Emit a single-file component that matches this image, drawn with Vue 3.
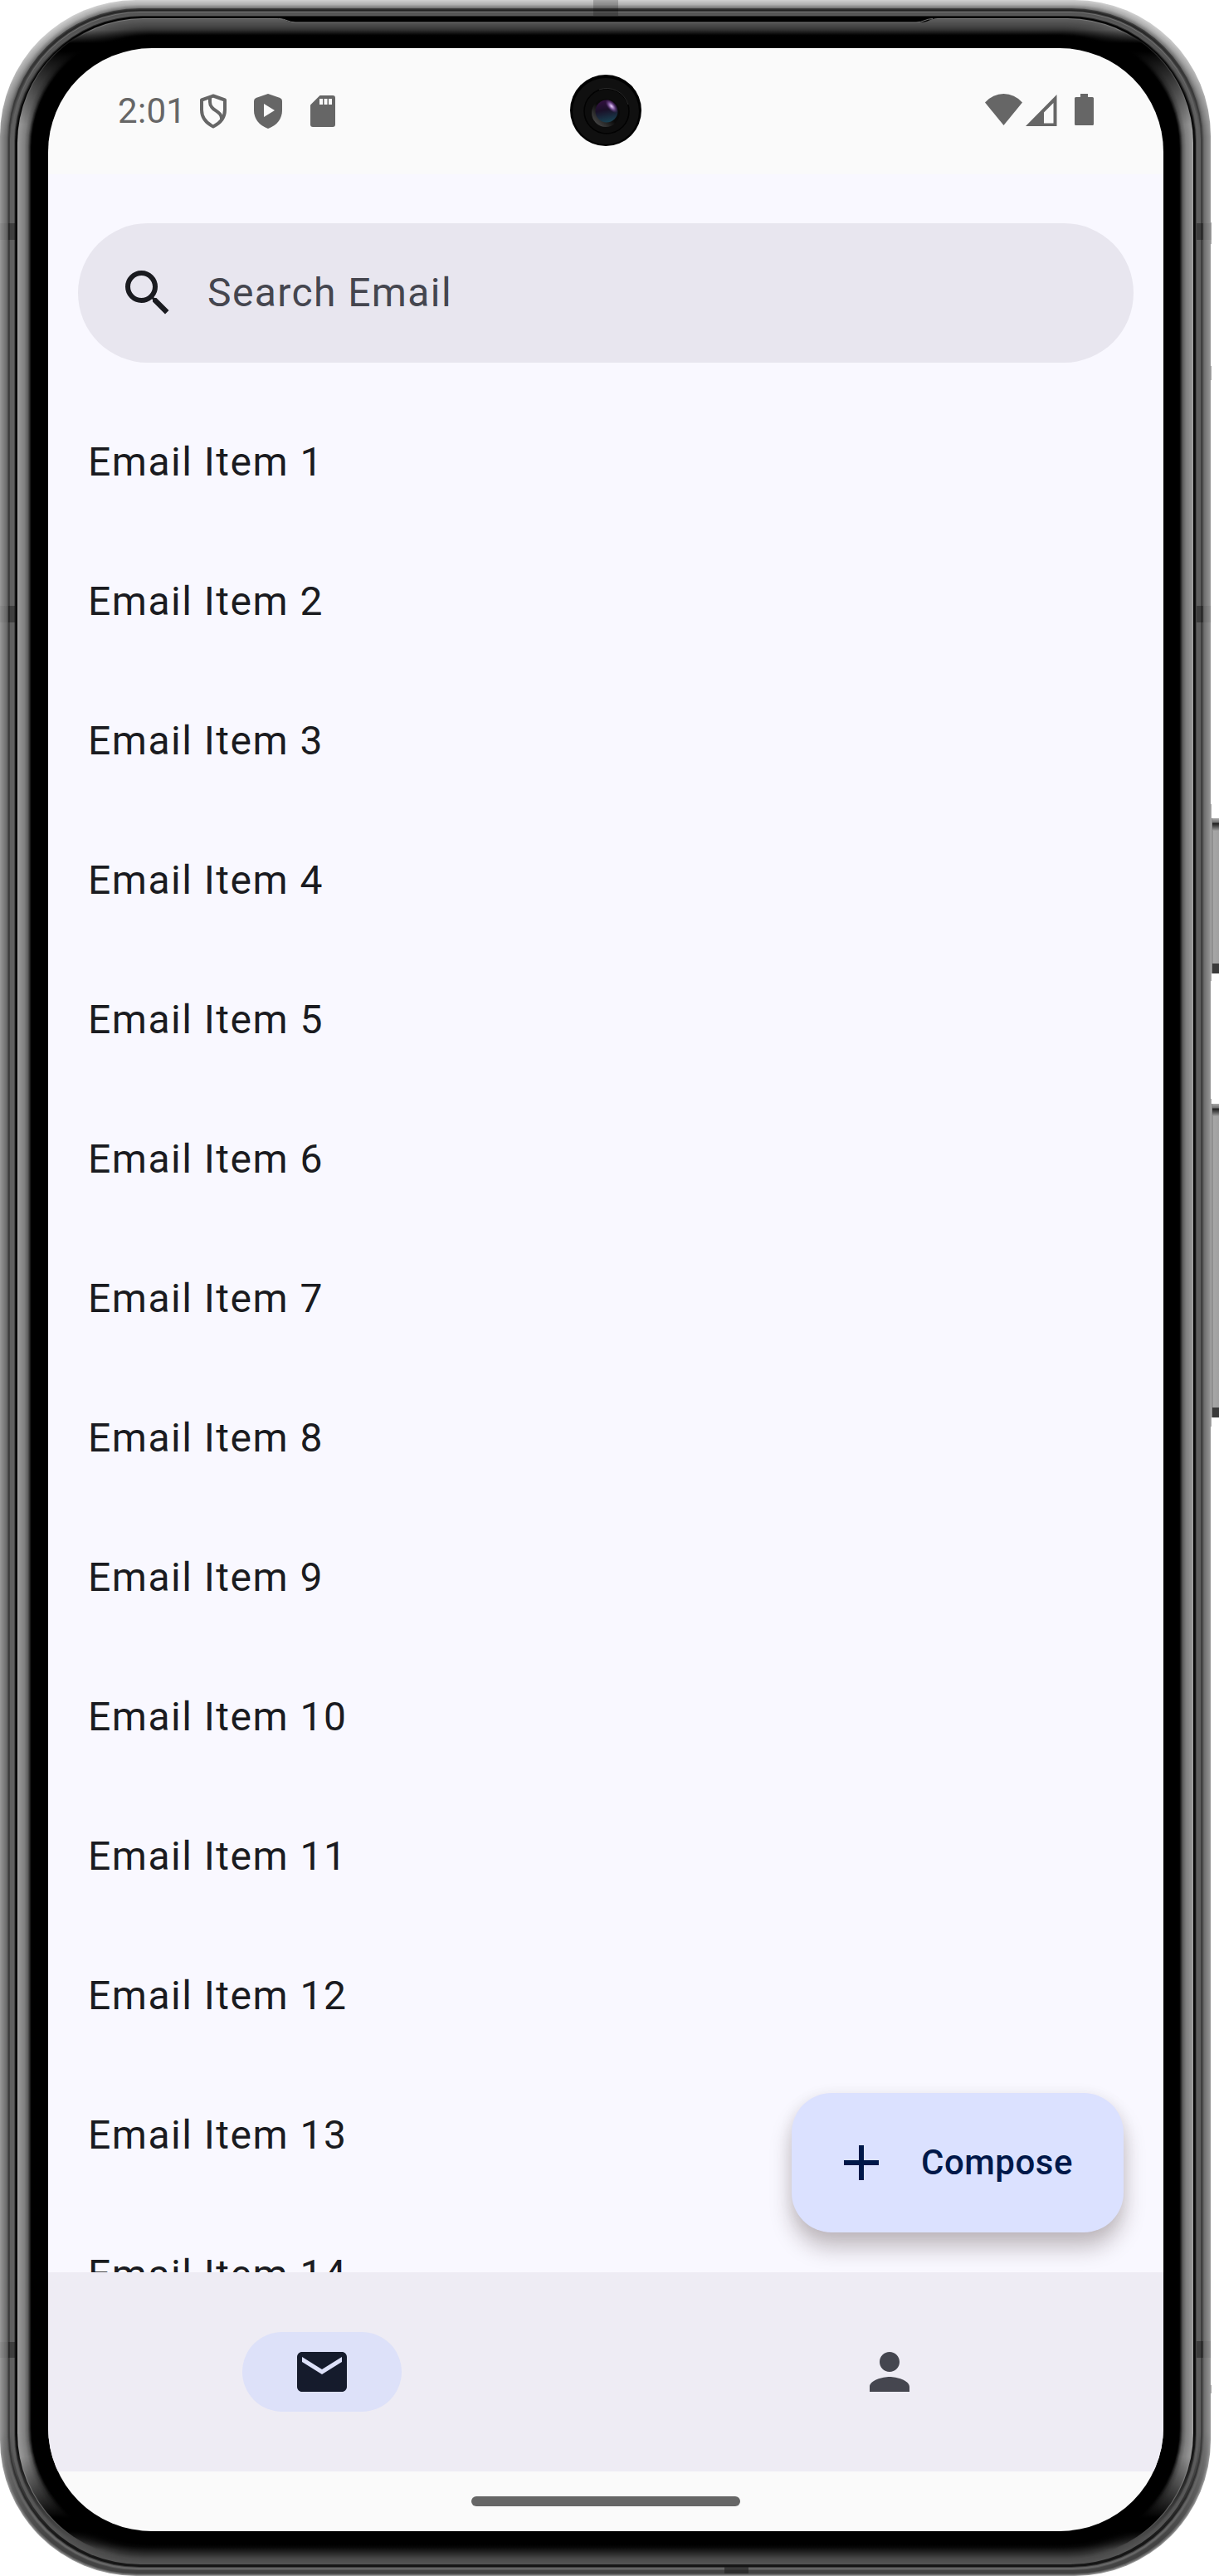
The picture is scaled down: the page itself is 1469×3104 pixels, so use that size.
<script setup>
const emails = Array.from({ length: 14 }, (_, i) => `Email Item ${i + 1}`)

// Grey levels of the metal frame, keyed by distance from the outer edge.
const sideProfile = [[0, 150], [2, 138], [7, 112], [9, 84], [10, 58], [11, 66], [12, 94], [16, 96], [17, 70], [18, 20], [20, 0], [21, 165], [22, 150], [29, 128], [33, 95], [35, 50], [37, 4], [38, 0], [58, 0]]
const topProfile = [[0, 205], [5, 175], [9, 120], [10, 60], [12, 34], [13, 60], [14, 112], [15, 84], [18, 88], [19, 40], [20, 0], [21, 10], [22, 118], [23, 92], [31, 70], [36, 48], [39, 30], [42, 3], [44, 0], [58, 0]]
const bottomProfile = [[0, 150], [1, 112], [3, 66], [6, 68], [8, 104], [9, 100], [10, 62], [11, 20], [13, 24], [14, 84], [20, 74], [28, 36], [34, 8], [38, 0], [58, 0]]

function level(profile, d) {
  for (let i = 1; i < profile.length; i++) {
    const [d1, v1] = profile[i]
    if (d <= d1) {
      const [d0, v0] = profile[i - 1]
      return Math.round(v0 + ((v1 - v0) * (d - d0)) / (d1 - d0))
    }
  }
  return 0
}
const grey = (v) => `rgb(${v},${v},${v})`

const rings = Array.from({ length: 45 }, (_, d) => {
  const top = grey(level(topProfile, d))
  const side = grey(level(sideProfile, d))
  const bottom = grey(level(bottomProfile, d))
  const glass = d > 21
  return {
    d,
    r: 164 - d * 0.62,
    stops: glass
      ? [[0, top], [36, top], [52, '#000'], [62, '#000'], [150, side], [2960, side], [3034, '#000'], [3050, '#000'], [3072, bottom], [3104, bottom]]
      : [[0, top], [40, top], [165, side], [2930, side], [3060, bottom], [3104, bottom]],
  }
})

const bands = [
  [0, 269, 18, 20], [0, 730, 18, 20], [0, 2822, 18, 19],
  [1442, 269, 18, 20], [1442, 730, 18, 20], [1442, 2821, 18, 20],
]
const plates = [[268, 26], [441, 17], [969, 213], [1324, 395], [2874, 10]]
const buttons = [[986, 187], [1330, 378]]
</script>

<template>
  <div class="device">
    <svg class="frame" width="1469" height="3104" viewBox="0 0 1469 3104" aria-hidden="true">
      <defs>
        <linearGradient
          v-for="ring in rings" :id="`ring-${ring.d}`" :key="ring.d"
          gradientUnits="userSpaceOnUse" x1="0" y1="0" x2="0" y2="3104"
        >
          <stop v-for="([y, c], i) in ring.stops" :key="i" :offset="y / 3104" :stop-color="c" />
        </linearGradient>
        <linearGradient id="key" x1="0" x2="1" y1="0" y2="0">
          <stop offset="0" stop-color="#777" /><stop offset=".25" stop-color="#a6a6a6" /><stop offset="1" stop-color="#a0a0a0" />
        </linearGradient>
        <linearGradient id="cap" x1="0" x2="0" y1="0" y2="1">
          <stop offset="0" stop-color="#aaa" /><stop offset=".3" stop-color="#777" /><stop offset=".42" stop-color="#222" />
          <stop offset=".6" stop-color="#444" /><stop offset="1" stop-color="#a0a0a0" />
        </linearGradient>
      </defs>
      <rect v-for="[y, h] in plates" :key="y" x="1458" :y="y" width="2" :height="h" fill="#aaa" />
      <g v-for="[y, h] in buttons" :key="y">
        <rect x="1460" :y="y" width="9" :height="h" fill="url(#key)" />
        <rect x="1461" :y="y" width="8" height="15" fill="url(#cap)" />
        <rect x="1461" :y="y + h - 12" width="8" height="12" fill="#3a3a3a" />
      </g>
      <rect
        v-for="ring in rings" :key="ring.d"
        :x="ring.d" :y="ring.d" :width="1459 - ring.d * 2" :height="3104 - ring.d * 2"
        :rx="ring.r" :fill="`url(#ring-${ring.d})`"
      />
      <path d="M330 20h808v2h-8c-8 0-12 5-20 5H354c-8 0-12-5-20-5h-4z" fill="#000" />
      <path d="M336 22.500c8 0 12 4.500 20 4.500h748c8 0 12-4.500 20-4.500" fill="none" stroke="#777" />
      <rect v-for="([x, y, w, h], i) in bands" :key="i" :x="x" :y="y" :width="w" :height="h" fill="#000" opacity=".05" />
      <rect v-for="([x, y, , h], i) in bands" :key="i" :x="x ? 1442 : 10" :y="y" width="8" :height="h" fill="#000" opacity=".3" />
      <rect x="715" y="0" width="30" height="19" fill="#000" opacity=".2" />
      <rect x="873" y="3093" width="29" height="8" fill="#222" opacity=".65" />
    </svg>

    <main class="screen">
      <header class="status">
        <span class="time">2:01</span>
        <svg class="ic-shield" width="34" height="42" viewBox="0 0 34 42">
          <path d="M17 2.500 31 7.500v12c0 9-5 15.500-14 20-9-4.500-14-11-14-20v-12z" fill="none" stroke="#666" stroke-width="4" stroke-linejoin="round" />
          <path d="M13 5v5c0 11 15 10 14 21" fill="none" stroke="#666" stroke-width="4" />
        </svg>
        <svg class="ic-play" width="34" height="42" viewBox="0 0 34 42">
          <path d="M17 0 31.500 5q2.500 1 2.500 3.500V20c0 10-6 18-17 22C6 38 0 30 0 20V8.500Q0 6 2.500 5z" fill="#666" />
          <path d="M12 12v16l13-8z" fill="#fafafa" />
        </svg>
        <svg class="ic-sd" width="30" height="38" viewBox="0 0 30 38">
          <path d="M11.500 0H27q3 0 3 3v32q0 3-3 3H3q-3 0-3-3V11.500z" fill="#666" />
          <path d="M11 4h4v7h-4zM16.500 4h4v7h-4zM22 4h4v7h-4z" fill="#fafafa" />
        </svg>
        <span class="spacer"></span>
        <svg class="ic-wifi" width="46" height="38" viewBox="0 0 46 38">
          <path d="M0 10.500Q9.500 0 22.500 0T45 10.500L22.500 38z" fill="#666" />
        </svg>
        <svg class="ic-signal" width="38" height="38" viewBox="0 0 38 38">
          <path fill-rule="evenodd" d="M37.500 0v38H0zM33.500 10 22 21.500V34.500h11.500z" fill="#666" />
        </svg>
        <svg class="ic-battery" width="23" height="38" viewBox="0 0 23 38">
          <path d="M7 0h9v4h5.500q1.500 0 1.500 1.500v31q0 1.500-1.500 1.500h-20Q0 38 0 36.500v-31Q0 4 1.500 4H7z" fill="#666" />
        </svg>
        <svg class="camera" width="88" height="88" viewBox="-44 -44 88 88">
          <defs>
            <linearGradient id="bevel" x1="1" y1="0" x2="0" y2="1">
              <stop offset="0" stop-color="#080808" /><stop offset=".5" stop-color="#0a0a0a" /><stop offset="1" stop-color="#5a5a5a" />
            </linearGradient>
            <linearGradient id="lens" x1=".3" y1="0" x2=".5" y2="1">
              <stop offset="0" stop-color="#32103f" /><stop offset=".45" stop-color="#1a1028" /><stop offset="1" stop-color="#184050" />
            </linearGradient>
            <radialGradient id="glint">
              <stop offset="0" stop-color="#efd8ff" /><stop offset=".4" stop-color="#a77bc8" stop-opacity=".8" /><stop offset="1" stop-color="#5b2d78" stop-opacity="0" />
            </radialGradient>
          </defs>
          <circle r="43" fill="#000" />
          <circle cy="1" r="40" fill="#101010" />
          <circle cx="1" cy="1" r="27" fill="#0d0d0d" stroke="#020202" stroke-width="1.500" />
          <path d="M-8-25A27 27 0 0 1 27-7" fill="none" stroke="#2a2a2a" />
          <circle cy="3" r="17" fill="url(#bevel)" />
          <circle cx="1" cy="1" r="13.500" fill="url(#lens)" />
          <ellipse cx="7" cy="-5" rx="10" ry="5" transform="rotate(48 7 -5)" fill="url(#glint)" />
        </svg>
      </header>

      <section class="content">
        <div class="search">
          <svg width="72" height="72" viewBox="0 0 24 24">
            <path fill="#1a1b20" d="M15.500 14h-.79l-.28-.27A6.471 6.471 0 0 0 16 9.500 6.500 6.500 0 1 0 9.500 16c1.610 0 3.090-.59 4.230-1.570l.27.28v.79l5 4.990L20.490 19l-4.990-5zm-6 0C7.010 14 5 11.990 5 9.500S7.010 5 9.500 5 14 7.010 14 9.500 11.990 14 9.500 14z" />
          </svg>
          <span>Search Email</span>
        </div>
        <ul class="list">
          <li v-for="email in emails" :key="email">{{ email }}</li>
        </ul>
        <button class="compose">
          <svg width="72" height="72" viewBox="0 0 24 24"><path fill="#001849" d="M19 13h-6v6h-2v-6H5v-2h6V5h2v6h6v2z" /></svg>
          <span>Compose</span>
        </button>
      </section>

      <nav class="tabs">
        <div class="tab">
          <span class="pill active">
            <svg width="72" height="72" viewBox="0 0 24 24"><path fill="#151b2c" d="M20 4H4c-1.100 0-1.990.9-1.990 2L2 18c0 1.100.9 2 2 2h16c1.100 0 2-.9 2-2V6c0-1.100-.9-2-2-2zm0 4-8 5-8-5V6l8 5 8-5v2z" /></svg>
          </span>
        </div>
        <div class="tab">
          <span class="pill">
            <svg width="72" height="72" viewBox="0 0 24 24"><path fill="#45464f" d="M12 12c2.210 0 4-1.790 4-4s-1.790-4-4-4-4 1.790-4 4 1.790 4 4 4zm0 2c-2.670 0-8 1.340-8 4v2h16v-2c0-2.660-5.330-4-8-4z" /></svg>
          </span>
        </div>
      </nav>
      <footer class="gesture"><span></span></footer>
    </main>
  </div>
</template>

<style>
body {
  background: #fff;
}
</style>

<style scoped>
.device {
  position: relative;
  width: 1469px;
  height: 3104px;
  box-sizing: border-box;
  padding: 58px 67px 54px 58px;
  overflow: hidden;
  font-family: Roboto, sans-serif;
}
.frame {
  position: absolute;
  inset: 0;
}
svg {
  display: block;
  flex: none;
}
.screen {
  position: relative;
  display: flex;
  flex-direction: column;
  width: 1344px;
  height: 2992px;
  border-radius: 125px;
  overflow: hidden;
  background: #fafafa;
}
.status {
  position: relative;
  display: flex;
  align-items: center;
  flex: none;
  height: 152px;
  box-sizing: border-box;
  padding: 0 84px 0 84px;
}
.time {
  width: 98px;
  font-size: 42px;
  line-height: 50px;
  letter-spacing: 0.3px;
  color: #666;
}
.ic-play {
  margin-left: 32px;
}
.ic-sd {
  margin-left: 34px;
}
.spacer {
  flex: 1;
}
.ic-wifi,
.ic-battery {
  position: relative;
  top: -2px;
}
.ic-signal {
  position: relative;
  top: -1px;
  margin: 0 21px 0 3px;
}
.camera {
  position: absolute;
  left: 628px;
  top: 31px;
}
.content {
  position: relative;
  display: flex;
  flex-direction: column;
  flex: 1;
  min-height: 0;
  overflow: hidden;
  background: #f9f8ff;
}
.search {
  display: flex;
  align-items: center;
  flex: none;
  gap: 36px;
  height: 168px;
  box-sizing: border-box;
  margin: 59px 36px 36px;
  padding: 0 48px;
  border-radius: 84px;
  background: #e8e6ef;
  color: #45464f;
  font-size: 48px;
  line-height: 72px;
  letter-spacing: 1.4px;
}
.list {
  margin: 0;
  padding: 0;
  list-style: none;
}
.list li {
  display: flex;
  align-items: center;
  height: 168px;
  padding: 0 48px;
  color: #1a1b20;
  font-size: 48px;
  line-height: 72px;
  letter-spacing: 1.5px;
}
.compose {
  position: absolute;
  right: 48px;
  bottom: 48px;
  display: flex;
  align-items: center;
  gap: 36px;
  width: 400px;
  height: 168px;
  padding: 0 48px;
  border: 0;
  border-radius: 48px;
  background: #dbe1ff;
  box-shadow: 0 19px 26px rgba(40, 20, 20, 0.25), 0 2px 18px rgba(40, 20, 20, 0.07);
  color: #001849;
  font: 500 42px/60px Roboto, sans-serif;
  letter-spacing: 0.5px;
}
.tabs {
  display: flex;
  flex: none;
  gap: 24px;
  height: 240px;
  background: #eeecf4;
}
.tab {
  display: flex;
  flex: 1;
  align-items: center;
  justify-content: center;
}
.pill {
  display: flex;
  align-items: center;
  justify-content: center;
  width: 192px;
  height: 96px;
  border-radius: 48px;
}
.pill.active {
  background: #dde1f9;
}
.gesture {
  display: flex;
  align-items: center;
  justify-content: center;
  flex: none;
  height: 72px;
}
.gesture span {
  width: 324px;
  height: 12px;
  border-radius: 6px;
  background: #666;
}
</style>
